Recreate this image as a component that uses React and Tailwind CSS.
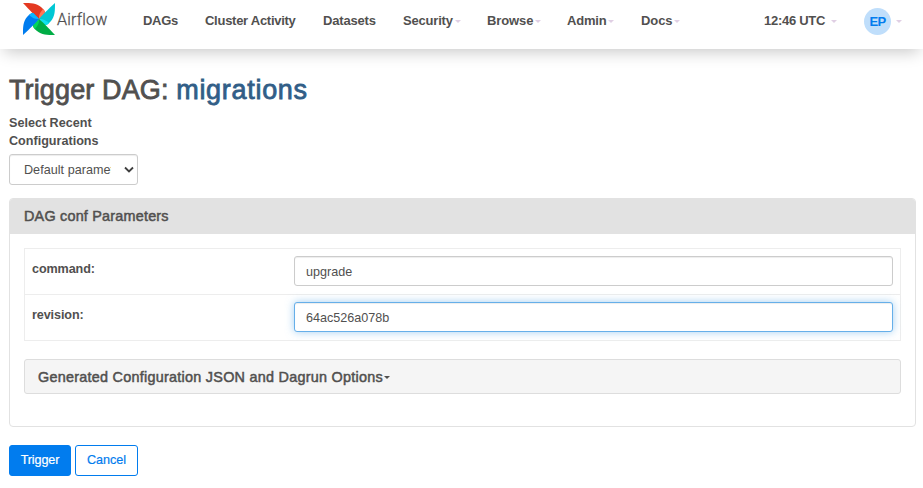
import { useState } from 'react'

const BLADES = [
  { angle: 0, main: '#e43921', light: '#ff7557' },
  { angle: 90, main: '#00c7d4', light: '#11e1ee' },
  { angle: 180, main: '#00ad46', light: '#04d659' },
  { angle: 270, main: '#017cee', light: '#0cb6ff' },
]

function Pinwheel() {
  return (
    <svg className="h-8 w-8 shrink-0" viewBox="0 0 96 96" aria-hidden="true">
      {BLADES.map((b) => (
        <g key={b.main} transform={`rotate(${b.angle} 48 48)`}>
          <path fill={b.main} d="M0 0C24 0 40 0 54 12C64 20 67 26 66 31L48 48C32 34 22 24 0 0Z" />
          <path fill={b.light} d="M48 48C47 38 50 29 60 18C66 24 67 28 66 31Z" />
        </g>
      ))}
      <circle cx="48" cy="48" r="1.5" fill="#51504f" />
    </svg>
  )
}

function Caret({ className }) {
  return (
    <svg className={`shrink-0 ${className}`} viewBox="0 0 6 3" aria-hidden="true">
      <path d="M0 0H6L3 3Z" fill="currentColor" />
    </svg>
  )
}

function NavItem({ label, width, text, caret }) {
  return (
    <a className={`flex shrink-0 items-center whitespace-nowrap ${width}`}>
      <span className={text}>{label}</span>
      {caret && <Caret className="mt-[2px] ml-[2px] h-[3px] w-[6px] text-[#e0cfe4]" />}
    </a>
  )
}

function Header() {
  return (
    <header className="flex h-[49px] items-start bg-white pl-[23px] shadow-[0_7px_16px_-4px_rgba(0,0,0,0.22)]">
      <div className="flex w-[120px] shrink-0 pt-[3px]">
        <Pinwheel />
        <span className="ml-[2px] pt-[5px] font-['Roboto',sans-serif] text-[16px] leading-6 font-light tracking-[0.2px] text-[#51504f] [-webkit-text-stroke:0.3px_#51504f]">
          Airflow
        </span>
      </div>
      <nav className="flex h-[41px] grow items-center text-[13px] font-bold">
        <NavItem label="DAGs" width="w-[62px]" text="tracking-[-0.3px]" />
        <NavItem label="Cluster Activity" width="w-[118px]" text="tracking-[-0.27px]" />
        <NavItem label="Datasets" width="w-[80px]" text="tracking-[-0.17px]" />
        <NavItem label="Security" width="w-[84px]" text="tracking-[-0.2px]" caret />
        <NavItem label="Browse" width="w-[80px]" text="tracking-[-0.1px]" caret />
        <NavItem label="Admin" width="w-[74px]" text="tracking-[-0.2px]" caret />
        <NavItem label="Docs" width="w-[123px]" text="tracking-[-0.1px]" caret />
        <div className="flex w-[100px] items-center">
          <span className="w-[67px] tracking-[-0.28px]">12:46 UTC</span>
          <Caret className="mt-[2px] h-[3px] w-[6px] text-[#e0cfe4]" />
        </div>
        <div className="flex items-center pt-[2px]">
          <span className="flex h-[27px] w-[27px] items-center justify-center rounded-full bg-[#bfdefb] text-[13px] tracking-[-0.6px] text-[#017cee]">
            EP
          </span>
          <Caret className="ml-[5px] h-[3px] w-[6px] text-[#e0cfe4]" />
        </div>
      </nav>
    </header>
  )
}

function ParamRow({ name, value, onChange, focused }) {
  return (
    <div className="flex h-[46px] border-b border-[#ededed] pt-[7px] pr-[7px] pl-[7px]">
      <label className="w-[262px] shrink-0 pt-[4px] text-[12.6px] leading-[18px] font-bold">
        <span className="tracking-[-0.1px]">{name}:</span>
      </label>
      <input
        className={`h-[30px] min-w-0 grow rounded-[3px] border bg-white px-[11px] pt-[2px] text-[12.6px] outline-none ${
          focused
            ? 'border-[#66afe9] shadow-[inset_0_1px_1px_rgba(0,0,0,0.075),0_0_8px_rgba(102,175,233,0.6)]'
            : 'border-[#cccccc] shadow-[inset_0_1px_1px_rgba(0,0,0,0.075)]'
        }`}
        value={value}
        onChange={(e) => onChange(e.target.value)}
      />
    </div>
  )
}

export default function App() {
  const [command, setCommand] = useState('upgrade')
  const [revision, setRevision] = useState('64ac526a078b')
  return (
    <div className="h-[488px] w-[923px] overflow-hidden bg-white font-['Liberation_Sans',Arial,sans-serif] text-[#51504f]">
      <Header />
      <main className="pt-[23px] pr-[7px] pl-[9px]">
        <h2 className="h-[36px] text-[27px] leading-[36px] whitespace-nowrap [-webkit-text-stroke:0.8px_currentColor]">
          <span className="tracking-[0.13px]">Trigger DAG: </span>
          <span className="tracking-[0.7px] text-[#315e87]">migrations</span>
        </h2>
        <label className="mt-[6px] block w-[128px] text-[12.6px] leading-[18px] font-bold">
          Select Recent Configurations
        </label>
        <button className="mt-[4px] flex h-[31px] w-[129px] items-center rounded-[3px] border border-[#cccccc] bg-white pr-[3px] pl-[14px] text-[12.6px] shadow-[inset_0_1px_1px_rgba(0,0,0,0.075)]">
          <span className="w-[87px] overflow-hidden pt-[1px] text-left tracking-[0.03px] whitespace-nowrap">
            Default parameters
          </span>
          <svg className="ml-auto h-[10px] w-[10px]" viewBox="0 0 10 10" fill="none" aria-hidden="true">
            <path d="M1 2.5L5 6.5L9 2.5" stroke="#3f3f3f" strokeWidth="1.8" />
          </svg>
        </button>

        <section className="mt-[13px] h-[229px] rounded-[4px] border border-[#e2e2e2]">
          <h4 className="h-[35px] rounded-t-[3px] bg-[#e2e2e2] pl-[14px] text-[14.4px] leading-[34px] [-webkit-text-stroke:0.5px_currentColor]">
            <span className="tracking-[0.21px]">DAG conf Parameters</span>
          </h4>
          <div className="px-[14px] pt-[14px]">
            <div className="border border-b-0 border-[#ededed]">
              <ParamRow name="command" value={command} onChange={setCommand} />
              <ParamRow name="revision" value={revision} onChange={setRevision} focused />
            </div>
            <div className="mt-[18px] flex h-[35px] items-center rounded-[3px] border border-[#dddddd] bg-[#f5f5f5] pl-[13px] text-[14.4px] [-webkit-text-stroke:0.5px_currentColor]">
              <span className="pt-[2px] tracking-[0.26px]">Generated Configuration JSON and Dagrun Options</span>
              <Caret className="mt-[1px] ml-[1px] h-[3px] w-[6px]" />
            </div>
          </div>
        </section>

        <div className="mt-[18px] flex gap-[4px] text-[12.6px]">
          <button className="h-[31px] w-[62px] rounded-[3px] border border-[#017cee] bg-[#017cee] text-white [-webkit-text-stroke:0.2px_currentColor]">
            <span className="tracking-[-0.1px]">Trigger</span>
          </button>
          <button className="h-[31px] w-[63px] rounded-[3px] border border-[#017cee] bg-white text-[#017cee] [-webkit-text-stroke:0.2px_currentColor]">
            Cancel
          </button>
        </div>
      </main>
    </div>
  )
}
